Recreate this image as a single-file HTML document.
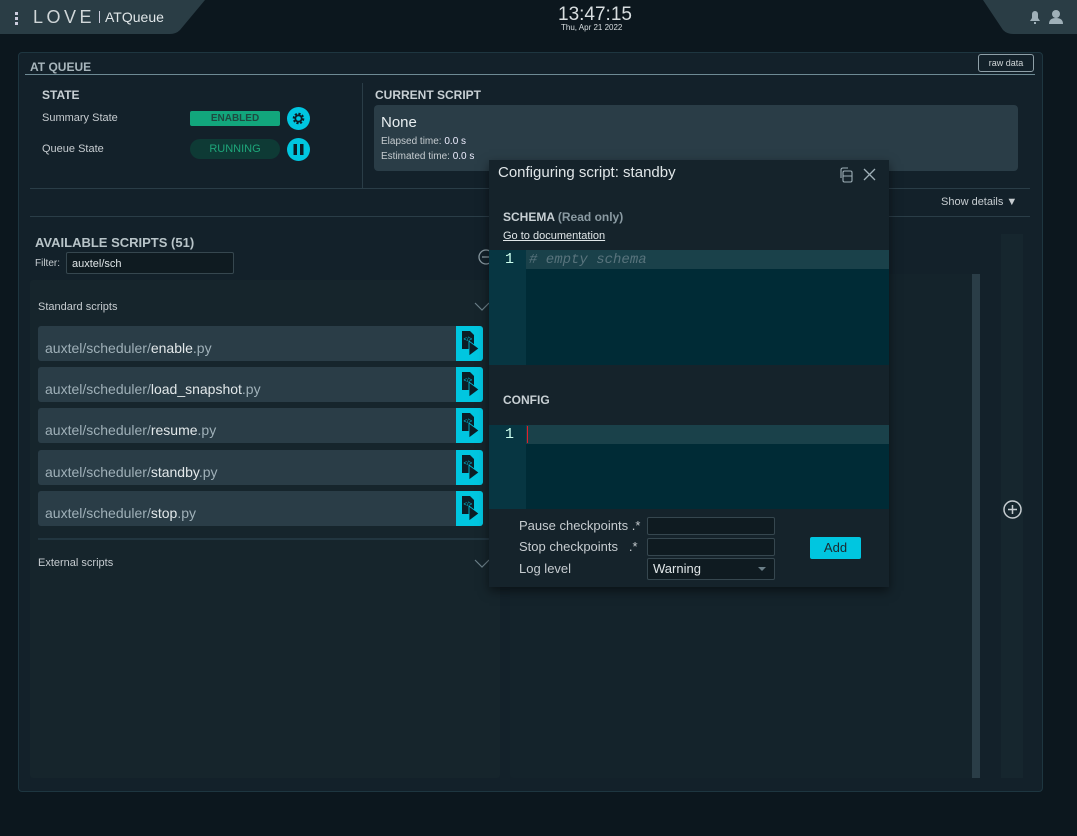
<!DOCTYPE html>
<html><head><meta charset="utf-8">
<style>
*{margin:0;padding:0;box-sizing:border-box}
body{width:1077px;height:836px;background:#0c171e;font-family:"Liberation Sans",sans-serif;color:#c6ccd0;position:relative;overflow:hidden}
.a{position:absolute;white-space:nowrap}
.b{font-weight:bold}
.item{position:absolute;left:38px;width:445px;height:35px;background:#2a3d47;border-radius:3px;font-size:14px;color:#9fb0b8}
.item span.t{position:absolute;left:7px;top:14px}
.item span.t b{font-weight:normal;color:#e2e8ea}
.ic{position:absolute;right:0;top:0;width:27px;height:35px;background:#00c6e0;border-radius:0 3px 3px 0}
.inp{position:absolute;border:1px solid #36474f;background:#0f1b21;border-radius:2px}
</style></head><body>
<svg class="a" style="left:0;top:0" width="1077" height="36">
<path d="M0 0H205L180 30Q176 34 170 34H0Z" fill="#2a3d45"/>
<path d="M983 0H1077V34H1013Q1007 34 1003 30Z" fill="#2a3d45"/>
</svg>
<div class="a" style="left:15px;top:12px;width:3px;height:3px;background:#ccd;box-shadow:0 5px 0 #ccd,0 10px 0 #ccd"></div>
<div class="a" style="left:33px;top:7px;font-size:18px;letter-spacing:3.5px;color:#d0d6d8">LOVE</div>
<div class="a" style="left:99px;top:11px;width:1px;height:12px;background:#ccd"></div>
<div class="a" style="left:105px;top:9px;font-size:14px;color:#e0e6e8">ATQueue</div>
<div class="a" style="left:558px;top:4px;font-size:19px;color:#d8dee0">13:47:15</div>
<div class="a" style="left:561px;top:23px;font-size:8px;color:#d8dee0">Thu, Apr 21 2022</div>
<svg class="a" style="left:1027px;top:9px" width="42" height="16"><path d="M3 12H13L11 9V5A3 3 0 0 0 5 5V9Z M7 13H9V15H7Z" fill="#9fb0b8"/><circle cx="29" cy="5" r="4" fill="#9fb0b8"/><path d="M22 15Q22 9 29 9Q36 9 36 15Z" fill="#9fb0b8"/></svg>

<div class="a" style="left:18px;top:52px;width:1025px;height:740px;background:#13212a;border:1px solid #1e3640;border-radius:4px"></div>
<div class="a b" style="left:30px;top:60px;font-size:12px;color:#a8b6bc">AT QUEUE</div>
<div class="a" style="left:25px;top:74px;width:1010px;height:1px;background:#6e8a94"></div>
<div class="a" style="left:978px;top:54px;width:56px;height:18px;border:1px solid #8fa0a8;border-radius:3px;font-size:9px;color:#d0d6d8;text-align:center;line-height:16px">raw data</div>

<div class="a b" style="left:42px;top:88px;font-size:12px;color:#c8d0d4">STATE</div>
<div class="a" style="left:42px;top:112px;font-size:11px">Summary State</div>
<div class="a b" style="left:190px;top:111px;width:90px;height:15px;background:#12a67c;border-radius:2px;color:#1e4a40;font-size:10px;text-align:center;line-height:15px">ENABLED</div>
<svg class="a" style="left:287px;top:107px" width="23" height="23"><circle cx="11.5" cy="11.5" r="11.5" fill="#00c6e0"/><circle cx="11.5" cy="11.5" r="4.5" fill="none" stroke="#0c1d26" stroke-width="2.6" stroke-dasharray="2 1.5"/><circle cx="11.5" cy="11.5" r="3.2" fill="none" stroke="#0c1d26" stroke-width="1.8"/></svg>
<div class="a" style="left:42px;top:143px;font-size:11px">Queue State</div>
<div class="a" style="left:190px;top:139px;width:90px;height:20px;background:#0e3a35;border-radius:10px;color:#1ea67a;font-size:11px;text-align:center;line-height:20px">RUNNING</div>
<svg class="a" style="left:287px;top:138px" width="23" height="23"><circle cx="11.5" cy="11.5" r="11.5" fill="#00c6e0"/><rect x="6.5" y="6" width="3.5" height="11" fill="#0c1d26"/><rect x="13" y="6" width="3.5" height="11" fill="#0c1d26"/></svg>
<div class="a" style="left:362px;top:83px;width:1px;height:105px;background:#2a3d47"></div>

<div class="a b" style="left:375px;top:88px;font-size:12px;color:#c8d0d4">CURRENT SCRIPT</div>
<div class="a" style="left:374px;top:105px;width:644px;height:66px;background:#2a3d47;border-radius:4px"></div>
<div class="a" style="left:381px;top:114px;font-size:15px;color:#e8eef0">None</div>
<div class="a" style="left:381px;top:136px;font-size:10px">Elapsed time: <b style="font-weight:normal;color:#eef">0.0 s</b></div>
<div class="a" style="left:381px;top:151px;font-size:10px">Estimated time: <b style="font-weight:normal;color:#eef">0.0 s</b></div>
<div class="a" style="left:30px;top:188px;width:1000px;height:1px;background:#2a3d47"></div>
<div class="a" style="left:941px;top:196px;font-size:11px">Show details ▼</div>
<div class="a" style="left:30px;top:216px;width:1000px;height:1px;background:#2a3d47"></div>

<div class="a b" style="left:35px;top:235px;font-size:13px;color:#b8c4c8">AVAILABLE SCRIPTS (51)</div>
<div class="a" style="left:35px;top:258px;font-size:10px">Filter:</div>
<div class="inp" style="left:66px;top:252px;width:168px;height:22px;font-size:11px;color:#e0e6e8;padding:5px 5px">auxtel/sch</div>

<div class="a" style="left:30px;top:280px;width:470px;height:498px;background:#16252c;border-radius:3px"></div>
<div class="a" style="left:38px;top:301px;font-size:11px">Standard scripts</div>
<svg class="a" style="left:474px;top:302px" width="16" height="10"><path d="M1 1L8 8L15 1" fill="none" stroke="#6b7f88" stroke-width="1.2"/></svg>
<div class="item" style="top:326px"><span class="t">auxtel/scheduler/<b>enable</b>.py</span><div class="ic"></div></div>
<div class="item" style="top:367px"><span class="t">auxtel/scheduler/<b>load_snapshot</b>.py</span><div class="ic"></div></div>
<div class="item" style="top:408px"><span class="t">auxtel/scheduler/<b>resume</b>.py</span><div class="ic"></div></div>
<div class="item" style="top:450px"><span class="t">auxtel/scheduler/<b>standby</b>.py</span><div class="ic"></div></div>
<div class="item" style="top:491px"><span class="t">auxtel/scheduler/<b>stop</b>.py</span><div class="ic"></div></div>
<svg class="a" style="left:459px;top:329px" width="22" height="200">
<defs><g id="fi"><path d="M3 2H11L15 6V20H3Z" fill="#0c1d26"/><path d="M10 12V27L20 19.5Z" fill="#0c1d26" stroke="#00c6e0" stroke-width="0.8"/><text x="4.5" y="12" font-size="6" fill="#00c6e0" font-family="Liberation Sans">&lt;/&gt;</text></g></defs>
<use href="#fi" y="0"/><use href="#fi" y="41"/><use href="#fi" y="82"/><use href="#fi" y="124"/><use href="#fi" y="165"/>
</svg>
<div class="a" style="left:38px;top:538px;width:452px;height:2px;background:#223640"></div>
<div class="a" style="left:38px;top:557px;font-size:11px">External scripts</div>
<svg class="a" style="left:474px;top:559px" width="16" height="10"><path d="M1 1L8 8L15 1" fill="none" stroke="#6b7f88" stroke-width="1.2"/></svg>
<svg class="a" style="left:478px;top:249px" width="14" height="16"><circle cx="8" cy="8" r="7" fill="none" stroke="#8a9aa2" stroke-width="1.3"/><path d="M4 8H12" stroke="#8a9aa2" stroke-width="1.3"/></svg>

<div class="a" style="left:510px;top:274px;width:470px;height:504px;background:#14232b;border-radius:3px"></div>
<div class="a" style="left:972px;top:274px;width:8px;height:504px;background:#2a3d47"></div>
<div class="a" style="left:1001px;top:234px;width:22px;height:544px;background:#16262e"></div>
<svg class="a" style="left:1002px;top:499px" width="21" height="21"><circle cx="10.5" cy="10.5" r="8.5" fill="none" stroke="#c6ccd0" stroke-width="1.5"/><path d="M6 10.5H15M10.5 6V15" stroke="#c6ccd0" stroke-width="1.5"/></svg>

<div class="a" style="left:489px;top:160px;width:400px;height:427px;background:#15232b;box-shadow:0 4px 10px rgba(0,0,0,.5)"></div>
<div class="a" style="left:498px;top:164px;font-size:15px;color:#e0e6e8">Configuring script: standby</div>
<svg class="a" style="left:838px;top:166px" width="42" height="17"><rect x="5" y="5" width="9" height="11" rx="1.5" fill="none" stroke="#9fb0b8" stroke-width="1.1"/><path d="M5 10H14M3 12V4Q3 2 5 2H10" fill="none" stroke="#9fb0b8" stroke-width="1.1"/><path d="M26 3L37 14M37 3L26 14" stroke="#9fb0b8" stroke-width="1.3"/></svg>
<div class="a b" style="left:503px;top:210px;font-size:12px;color:#c8d0d4">SCHEMA <span style="color:#8a9aa2">(Read only)</span></div>
<div class="a" style="left:503px;top:230px;font-size:11px;color:#e0e6e8;text-decoration:underline">Go to documentation</div>
<div class="a" style="left:489px;top:250px;width:400px;height:115px;background:#002b36"></div>
<div class="a" style="left:489px;top:250px;width:37px;height:115px;background:#073642"></div>
<div class="a" style="left:526px;top:250px;width:363px;height:19px;background:#1a414a"></div>
<div class="a" style="left:505px;top:251px;font:15px 'Liberation Mono',monospace;color:#cfe">1</div>
<div class="a" style="left:529px;top:252px;font:italic 14px 'Liberation Mono',monospace;color:#58737c">#&nbsp;empty schema</div>
<div class="a b" style="left:503px;top:393px;font-size:12px;color:#c8d0d4">CONFIG</div>
<div class="a" style="left:489px;top:425px;width:400px;height:84px;background:#002b36"></div>
<div class="a" style="left:489px;top:425px;width:37px;height:84px;background:#073642"></div>
<div class="a" style="left:526px;top:425px;width:363px;height:19px;background:#1a414a"></div>
<div class="a" style="left:527px;top:426px;width:1px;height:17px;background:#e0202a"></div>
<div class="a" style="left:505px;top:426px;font:15px 'Liberation Mono',monospace;color:#cfe">1</div>
<div class="a" style="left:519px;top:518px;font-size:13px">Pause checkpoints .*</div>
<div class="a" style="left:519px;top:539px;font-size:13px">Stop checkpoints &nbsp;&nbsp;.*</div>
<div class="a" style="left:519px;top:561px;font-size:13px">Log level</div>
<div class="inp" style="left:647px;top:517px;width:128px;height:18px"></div>
<div class="inp" style="left:647px;top:538px;width:128px;height:18px"></div>
<div class="inp" style="left:647px;top:558px;width:128px;height:22px;font-size:13px;color:#e0e6e8;padding:2px 5px">Warning<span style="position:absolute;right:8px;top:8px;border:4px solid transparent;border-top:4px solid #6b7f88"></span></div>
<div class="a" style="left:810px;top:537px;width:51px;height:22px;background:#00c6e0;border-radius:2px;font-size:13px;color:#1a2a30;text-align:center;line-height:22px">Add</div>
</body></html>
